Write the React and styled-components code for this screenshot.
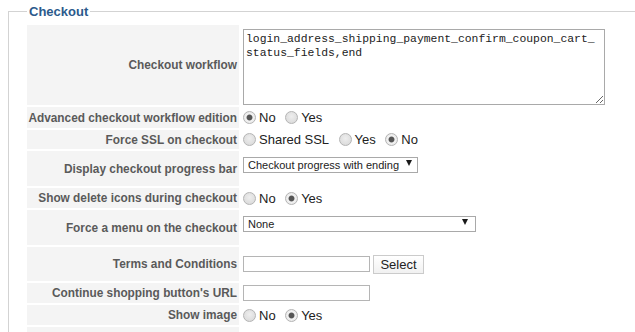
import React from "react"
import styled, {createGlobalStyle} from "styled-components"

const GlobalStyle = createGlobalStyle`
  html, body {
    margin: 0;
    padding: 0;
    background: #fff;
    overflow: hidden;
  }
  body {
    font-family: "Liberation Sans", Arial, sans-serif;
  }
`

const Page = styled.div`
  padding: 4px 0 0 8px;
`

const Fieldset = styled.fieldset`
  margin: 0;
  width: 700px;
  min-width: 0;
  border: 1px solid #d3d3d3;
  padding: 6px 0 0 18px;
`

const Legend = styled.legend`
  padding: 0 2px;
  font-size: 13px;
  line-height: 15px;
  font-weight: bold;
  color: #2b5a8c;
`

const Form = styled.div`
  display: flex;
  flex-direction: column;
  gap: 2px;
`

const Row = styled.div`
  display: flex;
  height: ${props => props.h}px;
`

const Label = styled.div`
  width: 212px;
  flex: none;
  box-sizing: border-box;
  padding-right: 2px;
  background: #f4f4f4;
  display: flex;
  align-items: center;
  justify-content: flex-end;
  text-align: right;
  white-space: nowrap;
  font-size: 11.85px;
  font-weight: bold;
  color: #5a5a5a;
`

const Value = styled.div`
  flex: 1;
  display: flex;
  align-items: ${props => (props.top ? "flex-start" : "center")};
  padding: ${props => (props.top ? `${props.top}px 0 0 4px` : "0 0 0 4px")};
`

const TextArea = styled.textarea`
  width: 362px;
  height: 76px;
  box-sizing: border-box;
  margin: 0;
  padding: 2px;
  border: 1px solid #a9a9a9;
  font-family: "Liberation Mono", Consolas, monospace;
  font-size: 11.4px;
  line-height: 14px;
  color: #222;
  white-space: pre;
  overflow: hidden;
`

const Option = styled.label`
  display: inline-flex;
  align-items: center;
  gap: 3px;
  margin-right: 9.5px;
  font-size: 13px;
  color: #222;
`

const Radio = styled.input.attrs({type: "radio"})`
  appearance: none;
  margin: 0;
  width: 13px;
  height: 13px;
  border-radius: 50%;
  border: 1px solid #b4b4b4;
  box-sizing: border-box;
  background: radial-gradient(circle at 50% 40%, #eeeeee 0, #d6d6d6 100%);

  &:checked {
    background: radial-gradient(circle, #555 0 2.3px, #8a8a8a 2.8px, #f2f2f2 3.4px, #e2e2e2 100%);
  }
`

const SelectWrap = styled.div`
  position: relative;
  width: ${props => props.w}px;
  height: 16px;

  &::after {
    content: "";
    position: absolute;
    right: ${props => props.arrow}px;
    top: 5px;
    border-left: 3px solid transparent;
    border-right: 3px solid transparent;
    border-top: 6px solid #1a1a1a;
    pointer-events: none;
  }
`

const Select = styled.select`
  appearance: none;
  width: 100%;
  height: 100%;
  box-sizing: border-box;
  margin: 0;
  padding: 0 0 0 4px;
  border: 1px solid #a9a9a9;
  border-radius: 0;
  background: #fff;
  font-family: "Liberation Sans", Arial, sans-serif;
  font-size: 11px;
  color: #222;
`

const TextInput = styled.input.attrs({type: "text"})`
  width: 127px;
  height: 16px;
  box-sizing: border-box;
  margin: 0;
  border: 1px solid #b5b5b5;
`

const Button = styled.button`
  width: 51px;
  height: 19px;
  margin: 0 0 0 3px;
  padding: 0;
  border: 1px solid #cbcbcb;
  background: linear-gradient(#ffffff, #f1f1f1);
  font-family: "Liberation Sans", Arial, sans-serif;
  font-size: 13px;
  color: #222;
`

const RadioGroup = ({name, options, checked}) => (
  <>
    {options.map(opt => (
      <Option key={opt}>
        <Radio name={name} defaultChecked={opt === checked} />
        {opt}
      </Option>
    ))}
  </>
)

const workflow = "login_address_shipping_payment_confirm_coupon_cart_\nstatus_fields,end"

const App = () => (
  <Page>
    <GlobalStyle />
    <Fieldset>
      <Legend>Checkout</Legend>
      <Form>
        <Row h={80}>
          <Label>Checkout workflow</Label>
          <Value top={4}>
            <TextArea defaultValue={workflow} />
          </Value>
        </Row>
        <Row h={21}>
          <Label>Advanced checkout workflow edition</Label>
          <Value>
            <RadioGroup name="advanced" options={["No", "Yes"]} checked="No" />
          </Value>
        </Row>
        <Row h={19}>
          <Label>Force SSL on checkout</Label>
          <Value>
            <RadioGroup name="ssl" options={["Shared SSL", "Yes", "No"]} checked="No" />
          </Value>
        </Row>
        <Row h={35}>
          <Label>Display checkout progress bar</Label>
          <Value top={4}>
            <SelectWrap w={175} arrow={6}>
              <Select defaultValue="ending">
                <option value="ending">Checkout progress with ending</option>
              </Select>
            </SelectWrap>
          </Value>
        </Row>
        <Row h={20}>
          <Label>Show delete icons during checkout</Label>
          <Value>
            <RadioGroup name="delete" options={["No", "Yes"]} checked="Yes" />
          </Value>
        </Row>
        <Row h={35}>
          <Label>Force a menu on the checkout</Label>
          <Value top={4}>
            <SelectWrap w={233} arrow={8}>
              <Select defaultValue="none">
                <option value="none">None</option>
              </Select>
            </SelectWrap>
          </Value>
        </Row>
        <Row h={34}>
          <Label>Terms and Conditions</Label>
          <Value>
            <TextInput />
            <Button>Select</Button>
          </Value>
        </Row>
        <Row h={20}>
          <Label>Continue shopping button's URL</Label>
          <Value>
            <TextInput />
          </Value>
        </Row>
        <Row h={20}>
          <Label>Show image</Label>
          <Value>
            <RadioGroup name="image" options={["No", "Yes"]} checked="Yes" />
          </Value>
        </Row>
        <Row h={21}>
          <Label />
          <Value />
        </Row>
      </Form>
    </Fieldset>
  </Page>
)

export default App
